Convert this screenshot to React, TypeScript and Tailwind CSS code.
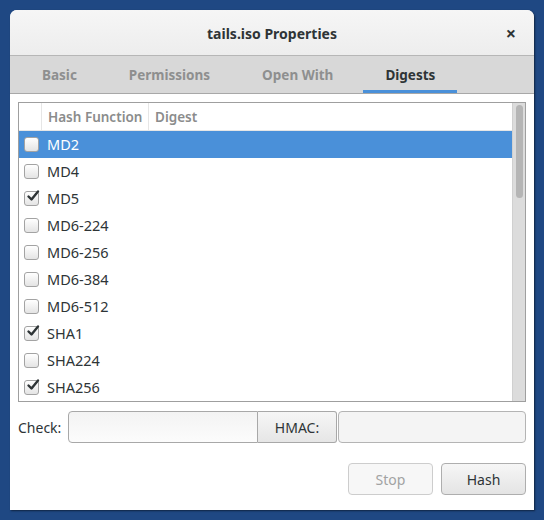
import React from 'react';

const rows: { name: string; checked: boolean }[] = [
  { name: 'MD2', checked: false },
  { name: 'MD4', checked: false },
  { name: 'MD5', checked: true },
  { name: 'MD6-224', checked: false },
  { name: 'MD6-256', checked: false },
  { name: 'MD6-384', checked: false },
  { name: 'MD6-512', checked: false },
  { name: 'SHA1', checked: true },
  { name: 'SHA224', checked: false },
  { name: 'SHA256', checked: true },
];

const tabs = ['Basic', 'Permissions', 'Open With', 'Digests'];

const CheckBox: React.FC<{ checked: boolean }> = ({ checked }) => (
  <div className="relative w-[15px] h-[15px] rounded-[3px] border border-[#a3a3a3] bg-gradient-to-b from-[#ffffff] to-[#e4e4e4]">
    {checked && (
      <svg className="absolute left-[1px] top-[-3px] w-[14px] h-[14px]" viewBox="0 0 14 14">
        <path d="M2.5 7.5 L5.5 10.5 L12 2.5" fill="none" stroke="#2e3436" strokeWidth="2.4" strokeLinecap="round" strokeLinejoin="round" />
      </svg>
    )}
  </div>
);

export default function App() {
  return (
    <div className="w-[544px] h-[520px] bg-[#1f4883] p-[10px]" style={{ fontFamily: '"Noto Sans", "Open Sans", sans-serif' }}>
      <div className="w-[524px] h-[500px] bg-white rounded-t-[7px] flex flex-col overflow-hidden shadow-[1px_1px_2px_rgba(0,0,0,0.5)]">
        {/* Title bar */}
        <div className="h-[46px] shrink-0 bg-gradient-to-b from-[#f6f6f6] to-[#ededed] border-b border-[#b6b6b6] flex items-center justify-center relative">
          <span className="text-[14px] font-bold text-[#2e3436] pt-[2px]">tails.iso Properties</span>
          <span className="absolute right-[18px] top-[14px] text-[18px] font-bold text-[#2e3436] leading-none">×</span>
        </div>

        {/* Tabs */}
        <div className="h-[38px] shrink-0 bg-[#d8d8d8] border-b border-[#a8a8a8] flex pl-[6px]">
          {tabs.map((t) => (
            <div
              key={t}
              className={`mx-[4px] px-[22px] pt-[5px] flex items-center text-[13.5px] font-bold border-b-[3px] ${
                t === 'Digests' ? 'text-[#2e3436] border-[#4a90d9]' : 'text-[#8e8f8f] border-transparent'
              }`}
            >
              {t}
            </div>
          ))}
        </div>

        {/* Content */}
        <div className="flex-1 px-[8px] pt-[8px] flex flex-col">
          <div className="h-[300px] border border-[#9f9f9f] flex">
            <div className="flex-1 flex flex-col">
              <div className="h-[28px] flex border-b border-[#e6e6e6] text-[13.5px] text-[#8b8c8c] font-semibold">
                <div className="w-[23px] border-r border-[#e6e6e6]" />
                <div className="w-[107px] border-r border-[#e6e6e6] pl-[6px] pt-[2px] flex items-center">Hash Function</div>
                <div className="flex-1 pl-[6px] pt-[2px] flex items-center">Digest</div>
              </div>
              {rows.map((r, i) => (
                <div
                  key={r.name}
                  className={`h-[27px] flex items-center text-[14.5px] ${
                    i === 0 ? 'bg-[#4a90d9] text-white' : 'text-[#2e3436]'
                  }`}
                >
                  <div className="w-[23px] flex justify-center pl-[2px]">
                    <CheckBox checked={r.checked} />
                  </div>
                  <span className="pl-[5px]">{r.name}</span>
                </div>
              ))}
            </div>
            <div className="w-[13px] bg-[#dcdcdc] border-l border-[#d0d0d0] flex justify-center pt-[2px]">
              <div className="w-[7px] h-[93px] rounded-full bg-[#b5b5b5]" />
            </div>
          </div>

          <div className="mt-[9px] flex items-center h-[32px] text-[14px] text-[#2e3436]">
            <span className="w-[50px]">Check:</span>
            <div className="w-[190px] h-[32px] rounded-l-[4px] border border-[#a8a8a8] bg-gradient-to-b from-[#f3f3f3] to-[#fcfcfc]" />
            <div className="w-[79px] h-[32px] border border-l-0 border-[#a8a8a8] rounded-r-[3px] bg-gradient-to-b from-[#f6f6f6] to-[#e6e6e6] flex items-center justify-center">
              HMAC:
            </div>
            <div className="flex-1 h-[32px] ml-[1px] rounded-[4px] border border-[#b4b4b4] bg-[#f4f4f4]" />
          </div>

          <div className="mt-[20px] flex justify-end gap-[8px] text-[14px]">
            <div className="w-[85px] h-[32px] rounded-[4px] border border-[#cdcdcd] bg-[#f7f7f7] text-[#a2a3a3] flex items-center justify-center">
              Stop
            </div>
            <div className="w-[85px] h-[32px] rounded-[4px] border border-[#aeaeae] bg-gradient-to-b from-[#f6f6f6] to-[#e4e4e4] text-[#2e3436] flex items-center justify-center">
              Hash
            </div>
          </div>
        </div>
      </div>
    </div>
  );
}
